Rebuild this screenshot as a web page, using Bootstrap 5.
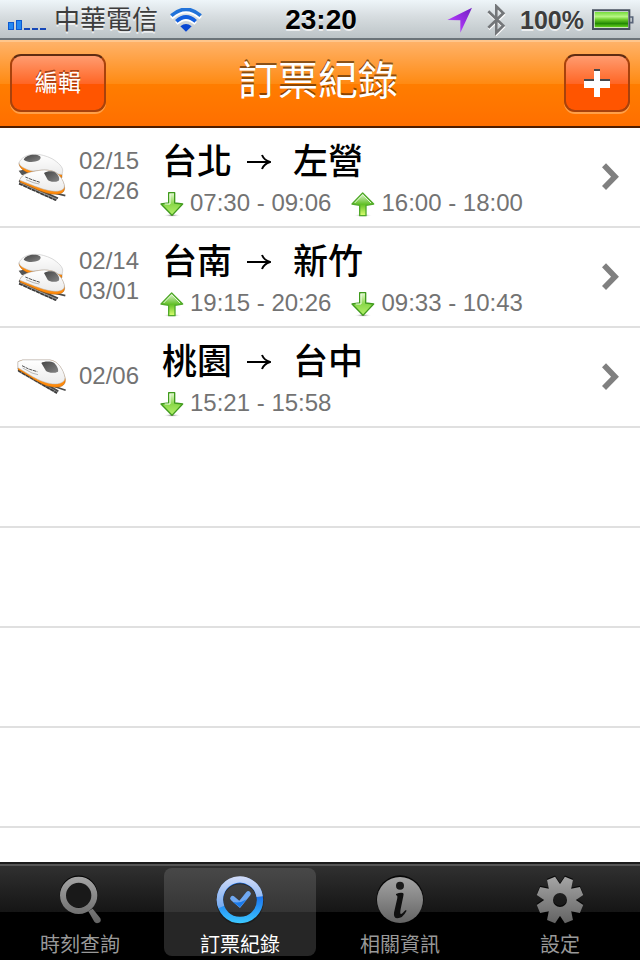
<!DOCTYPE html>
<html lang="zh-Hant">
<head>
<meta charset="utf-8">
<meta name="viewport" content="width=device-width, initial-scale=1">
<title>訂票紀錄</title>
<link href="https://cdn.jsdelivr.net/npm/bootstrap@5.3.0/dist/css/bootstrap.min.css" rel="stylesheet">
<style>
body { font-family: "Liberation Sans", "Noto Sans CJK TC", sans-serif; font-size: 24px; line-height: 30px; background: #fff; color: #000; }
svg { display: block; flex-shrink: 0; }
.status { height: 40px; padding: 2px 6px 0 8px; background: linear-gradient(#eef5f9, #d6dcdf 45%, #bcc4c7); border-bottom: 2px solid #6b7479; font-size: 26px; line-height: 36px; color: #3d3d3d; text-shadow: 0 2px 0 rgba(255,255,255,.7); }
.side { flex: 1 1 0; }
.wifi { margin-left: 12px; }
.bluetooth { margin: 0 14px; }
.clock { color: #000; font-size: 28px; }
.charge { font-size: 25px; }
.titlebar { height: 88px; padding: 0 10px 2px; border-top: 2px solid #ffc68c; border-bottom: 2px solid #4f1d00; background: linear-gradient(#ffb268, #ff8a12 50%, #ff7d00 50%, #ff6f00); }
.titlebar h1 { margin: 0 4px 4px 0; font-size: 40px; line-height: 48px; font-weight: 400; color: #fff; text-shadow: 0 -2px 0 rgba(70,35,0,.65); }
.btn-glossy { height: 58px; border: 2px solid #a8420c; border-top-color: #5f2c12; border-radius: 11px; padding: 0; font-size: 23px; line-height: 30px; color: #fff; text-shadow: 0 -2px 0 rgba(100,30,0,.6); background: linear-gradient(#ff9c70, #ff6524 52%, #ff5500 52%, #ff5500); box-shadow: 0 2px 0 rgba(255,190,120,.6); }
.btn-glossy:hover { color: #fff; background: #ff5500; }
.edit { width: 96px; }
.add { width: 66px; }
.list-group-flush > .trip { min-height: 100px; padding: 5px 20px 7px 16px; border-width: 0 0 2px; border-color: #e0e0e0; color: #737373; }
.list-group-flush > .trip:last-child { border-bottom-width: 2px; }
.train-icon { margin-top: 4px; }
.days { width: 81px; margin-left: 11px; }
.trip h2 { padding: 4px 0 0 2px; font-size: 35px; line-height: 48px; font-weight: 500; color: #000; }
.to { width: 24px; margin: 0 22px 0 15px; }
.legs { gap: 20px; margin-top: 2px; }
.legs svg { margin: 3px 6px 0 0; }
.blank-rows { background: repeating-linear-gradient(#fff 0 98px, #e0e0e0 98px 100px); }
.tabs { height: 98px; border-top: 2px solid #1c1c1c; background: linear-gradient(#555 0 2px, #303030 2px, #151515 48px, #000 48px); }
.tabs a { flex: 1 1 0; margin: 4px; height: 88px; padding-top: 8px; border-radius: 8px; color: #999; font-size: 20px; line-height: 28px; text-decoration: none; }
.tabs a.active { color: #fff; background: linear-gradient(#484848, #353535 44px, #262626 44px); }
.tabs svg { overflow: visible; margin-bottom: 7px; }
</style>
<script src="https://cdn.jsdelivr.net/npm/bootstrap@5.3.0/dist/js/bootstrap.bundle.min.js"></script>
</head>
<body class="d-flex flex-column min-vh-100">

<svg width="0" height="0" class="position-absolute" aria-hidden="true">
  <defs>
    <linearGradient id="gGreen" x1="0" y1="0" x2="0" y2="1"><stop offset="0" stop-color="#e4f8d4"/><stop offset=".5" stop-color="#8ad84a"/><stop offset="1" stop-color="#b5f06a"/></linearGradient>
    <linearGradient id="gUp" x1="0" y1="0" x2="0" y2="1"><stop offset="0" stop-color="#e4f8d6"/><stop offset=".5" stop-color="#62c026"/><stop offset="1" stop-color="#dcff70"/></linearGradient>
    <linearGradient id="gHull" x1="0" y1="0" x2="0" y2="1"><stop offset="0" stop-color="#fff"/><stop offset="1" stop-color="#ebebeb"/></linearGradient>
    <linearGradient id="gGlass" x1="0" y1="0" x2="1" y2="1"><stop offset="0" stop-color="#444"/><stop offset="1" stop-color="#858585"/></linearGradient>
    <linearGradient id="gTab" gradientUnits="userSpaceOnUse" x1="0" y1="0" x2="0" y2="144"><stop offset="0" stop-color="#a6a6a6"/><stop offset="1" stop-color="#626262"/></linearGradient>
    <linearGradient id="gSoft" gradientUnits="userSpaceOnUse" x1="0" y1="0" x2="0" y2="95"><stop offset="0" stop-color="#d3ddf9"/><stop offset="1" stop-color="#75a9ee"/></linearGradient>
    <linearGradient id="gBlue" gradientUnits="userSpaceOnUse" x1="0" y1="60" x2="0" y2="142"><stop offset="0" stop-color="#1b72ee"/><stop offset="1" stop-color="#3cc8ff"/></linearGradient>
    <radialGradient id="gShade"><stop offset="0" stop-color="#777"/><stop offset="1" stop-color="#fff" stop-opacity="0"/></radialGradient>
    <symbol id="down" viewBox="0 0 72 75">
      <ellipse cx="36" cy="70" rx="27" ry="5" fill="url(#gShade)"/>
      <path d="M26 2H44V33L68 36 36 70 3 36 26 33Z" fill="url(#gGreen)" stroke="#3f9a1c" stroke-width="4" stroke-linejoin="round"/>
      <path d="M30 6V36H14" fill="none" stroke="#f2fce9" stroke-width="3"/>
    </symbol>
    <symbol id="up" viewBox="0 0 72 75">
      <ellipse cx="36" cy="70" rx="28" ry="5" fill="url(#gShade)"/>
      <path d="M35 3 68 36 45 40V71H26V40L3 36Z" fill="url(#gUp)" stroke="#50a92a" stroke-width="4" stroke-linejoin="round"/>
      <path d="M35 8 60 33M35 8 11 33" stroke="#e2f7d4" stroke-width="3"/>
    </symbol>
    <symbol id="train" viewBox="48 48 156 117">
      <path d="M54 82 175 148 170 159 54 92Z" fill="#999"/>
      <path d="M54 88 171 156" stroke="#3a3a3a" stroke-width="5" stroke-dasharray="12 2"/>
      <path d="M54 80 175 151" stroke="#4a4a4a" stroke-width="5"/>
      <path d="M150 132 197 148" stroke="#4a4a4a" stroke-width="5"/>
      <path d="M54 62 68 57H150C174 60 190 86 196 114 198 129 188 139 168 139 140 139 118 125 100 114L54 86Z" fill="#ff8a0a" stroke="#6e4218" stroke-width="1"/>
      <path d="M54 62 68 57H150C174 60 190 85 195 110 194 122 184 128 166 129 142 129 118 118 98 107L54 80Z" fill="url(#gHull)" stroke="#b5b5b5" stroke-width="1.500"/>
      <path d="M124 66C130 60 154 60 162 65 172 74 176 86 174 92 162 98 146 96 138 90Z" fill="url(#gGlass)"/>
      <path d="M66 74 86 84 112 92" fill="none" stroke="#555" stroke-width="3" stroke-dasharray="10 2"/>
      <path d="M68 81 96 96 114 101" fill="none" stroke="#999" stroke-width="2"/>
    </symbol>
    <symbol id="trains" viewBox="48 66 156 156">
      <path d="M56 122 78 118 90 128 66 136Z" fill="#555"/>
      <path d="M57 98 92 112 186 132V143L170 138 88 131C70 122 56 112 57 98Z" fill="#ff8a0a" stroke="#6e4218" stroke-width="1"/>
      <path d="M57 99C62 84 80 73 104 73 120 72 140 78 156 86 176 98 190 112 188 124L186 134 150 128 92 122C74 116 60 110 57 99Z" fill="url(#gHull)" stroke="#b5b5b5" stroke-width="1.500"/>
      <path d="M71 89C76 76 96 72 112 75 124 78 124 84 117 91 102 98 82 98 71 89Z" fill="url(#gGlass)"/>
      <path d="M57 154 174 204 168 213 57 162Z" fill="#999"/>
      <path d="M57 161 168 211" stroke="#3a3a3a" stroke-width="5" stroke-dasharray="12 2"/>
      <path d="M57 152 174 205" stroke="#444" stroke-width="5"/>
      <path d="M150 186 196 197" stroke="#4a4a4a" stroke-width="5"/>
      <path d="M60 148C68 132 88 126 108 123 130 118 156 120 168 128 184 140 193 160 194 174 194 187 184 193 166 193 140 193 116 181 98 173L60 157Z" fill="#ff8a0a" stroke="#6e4218" stroke-width="1"/>
      <path d="M60 148C68 132 88 126 108 123 130 118 156 120 168 128 184 140 192 156 193 168 193 179 182 184 166 184 140 183 116 173 98 166L60 151Z" fill="url(#gHull)" stroke="#b5b5b5" stroke-width="1.500"/>
      <path d="M132 129C142 122 158 122 167 128 176 136 180 146 176 152 164 158 150 156 143 149Z" fill="url(#gGlass)"/>
      <path d="M76 141 96 149 120 157" fill="none" stroke="#555" stroke-width="3" stroke-dasharray="10 2"/>
      <path d="M78 149 100 158 118 162" fill="none" stroke="#999" stroke-width="2"/>
    </symbol>
    <symbol id="arrow" viewBox="0 0 24 18"><path d="M0 9H21M15 2Q17 7 23 9 17 11 15 16" fill="none" stroke="#000" stroke-width="2"/></symbol>
    <symbol id="chev" viewBox="0 0 54 81"><path d="M6 7 39 41 6 75" fill="none" stroke="#808080" stroke-width="17"/></symbol>
    <mask id="gearMask">
      <g fill="#fff" transform="rotate(22.500 72 72)">
        <path id="t1" d="M53 32 59 2H85L91 32Z"/>
        <use href="#t1" transform="rotate(45 72 72)"/><use href="#t1" transform="rotate(90 72 72)"/><use href="#t1" transform="rotate(135 72 72)"/><use href="#t1" transform="rotate(180 72 72)"/><use href="#t1" transform="rotate(225 72 72)"/><use href="#t1" transform="rotate(270 72 72)"/><use href="#t1" transform="rotate(315 72 72)"/>
      </g>
      <circle cx="72" cy="72" r="46" fill="#fff"/><circle cx="72" cy="72" r="21" fill="#000"/>
    </mask>
  </defs>
</svg>

<header>
  <div class="status d-flex align-items-center">
    <div class="side d-flex align-items-center">
      <svg width="38" height="22" viewBox="0 0 38 22" aria-hidden="true"><path d="M0 13H6V21H0ZM8 11H14V21H8Z" fill="#0c59d0"/><path d="M1 14H5V20H1ZM9 12H13V20H9Z" fill="#2489f2"/><path d="M16 19h6v2h-6zM24 19h6v2h-6zM32 19h6v2h-6z" fill="#1648b8"/></svg>
      <span class="ms-2">中華電信</span>
      <svg class="wifi" width="32" height="24" viewBox="0 0 96 72" aria-hidden="true"><path d="M4 26Q48-14 92 26M19 42Q48 16 77 42" fill="none" stroke="#fff" stroke-width="11" transform="translate(0 4)"/><path d="M4 23Q48-15 92 23" fill="none" stroke="#2273d9" stroke-width="11"/><path d="M19 40Q48 14 77 40" fill="none" stroke="#125fdf" stroke-width="11"/><path d="M31 55Q48 41 65 55L48 71Z" fill="#0847d3"/></svg>
    </div>
    <time class="clock fw-bold">23:20</time>
    <div class="side d-flex align-items-center justify-content-end">
      <svg width="26" height="26" viewBox="0 0 78 78" aria-hidden="true"><defs><linearGradient id="gLoc" x1="1" y1="0" x2="0" y2="1"><stop offset="0" stop-color="#7020c0"/><stop offset=".6" stop-color="#a534f0"/><stop offset="1" stop-color="#c879ff"/></linearGradient></defs><path d="M75 2 40 77V40L1 39Z" fill="url(#gLoc)"/></svg>
      <svg class="bluetooth" width="19" height="32" viewBox="0 0 57 96" aria-hidden="true"><path d="M4 22 49 65 28 86V7L49 28 4 71" fill="none" stroke="#fff" stroke-width="8" transform="translate(1 4)"/><path d="M4 22 49 65 28 86V7L49 28 4 71" fill="none" stroke="#737679" stroke-width="8"/></svg>
      <span class="charge fw-bold me-2">100%</span>
      <svg width="42" height="22" viewBox="0 0 126 66" aria-label="battery"><defs><linearGradient id="gBat" x1="0" y1="0" x2="0" y2="1"><stop offset="0" stop-color="#76dc3c"/><stop offset=".3" stop-color="#b8f584"/><stop offset=".5" stop-color="#6acb28"/><stop offset=".75" stop-color="#248a05"/><stop offset="1" stop-color="#66d61b"/></linearGradient></defs><path d="M3 4H112V60H3Z" fill="#e9f0ec" stroke="#47505f" stroke-width="6"/><path d="M8 9H108V55H8Z" fill="url(#gBat)"/><path d="M114 24H122V41H114" fill="none" stroke="#596579" stroke-width="5"/></svg>
    </div>
  </div>
  <nav class="titlebar d-flex align-items-center">
    <div class="side"><button type="button" class="btn btn-glossy edit">編輯</button></div>
    <h1>訂票紀錄</h1>
    <div class="side d-flex justify-content-end"><button type="button" class="btn btn-glossy add d-flex align-items-center justify-content-center" aria-label="新增"><svg width="26" height="28" viewBox="0 0 26 28"><path d="M10 0h6v10h10v7H16v9H10V17H0V10H10Z" fill="#46474a"/><path d="M10 2h6v10h10v7H16v9H10V19H0V12H10Z" fill="#fff"/></svg></button></div>
  </nav>
</header>

<main class="flex-grow-1 d-flex flex-column">
  <div class="list-group list-group-flush">
    <a href="#" class="list-group-item list-group-item-action trip d-flex align-items-center">
      <svg class="train-icon" width="52" height="52" aria-hidden="true"><use href="#trains"/></svg>
      <div class="days">02/15<br>02/26</div>
      <div class="flex-grow-1">
        <h2 class="m-0 d-flex align-items-center">台北<svg class="to" height="18"><use href="#arrow"/></svg>左營</h2>
        <div class="d-flex legs"><span class="d-flex align-items-center"><svg width="24" height="25"><use href="#down"/></svg>07:30 - 09:06</span><span class="d-flex align-items-center"><svg width="24" height="25"><use href="#up"/></svg>16:00 - 18:00</span></div>
      </div>
      <svg width="18" height="27" aria-hidden="true"><use href="#chev"/></svg>
    </a>
    <a href="#" class="list-group-item list-group-item-action trip d-flex align-items-center">
      <svg class="train-icon" width="52" height="52" aria-hidden="true"><use href="#trains"/></svg>
      <div class="days">02/14<br>03/01</div>
      <div class="flex-grow-1">
        <h2 class="m-0 d-flex align-items-center">台南<svg class="to" height="18"><use href="#arrow"/></svg>新竹</h2>
        <div class="d-flex legs"><span class="d-flex align-items-center"><svg width="24" height="25"><use href="#up"/></svg>19:15 - 20:26</span><span class="d-flex align-items-center"><svg width="24" height="25"><use href="#down"/></svg>09:33 - 10:43</span></div>
      </div>
      <svg width="18" height="27" aria-hidden="true"><use href="#chev"/></svg>
    </a>
    <a href="#" class="list-group-item list-group-item-action trip d-flex align-items-center">
      <svg width="52" height="39" aria-hidden="true"><use href="#train"/></svg>
      <div class="days">02/06</div>
      <div class="flex-grow-1">
        <h2 class="m-0 d-flex align-items-center">桃園<svg class="to" height="18"><use href="#arrow"/></svg>台中</h2>
        <div class="d-flex legs"><span class="d-flex align-items-center"><svg width="24" height="25"><use href="#down"/></svg>15:21 - 15:58</span></div>
      </div>
      <svg width="18" height="27" aria-hidden="true"><use href="#chev"/></svg>
    </a>
  </div>
  <div class="blank-rows flex-grow-1"></div>
</main>

<nav class="tabs d-flex text-center">
  <a href="#" class="d-flex flex-column align-items-center"><svg width="48" height="48" viewBox="0 0 144 144" aria-hidden="true"><circle cx="68" cy="57" r="47" fill="#191919"/><circle cx="68" cy="55" r="48" fill="none" stroke="#050505" stroke-width="17"/><circle cx="68" cy="58" r="47" fill="none" stroke="url(#gTab)" stroke-width="18"/><path d="M97 106 110 98 133 127Q137 137 129 140 120 144 115 137Z" fill="url(#gTab)"/></svg>時刻查詢</a>
  <a href="#" class="active d-flex flex-column align-items-center" aria-current="page"><svg width="48" height="48" viewBox="0 0 144 144" aria-hidden="true"><circle cx="72" cy="76" r="61" fill="none" stroke="#111" stroke-opacity=".5" stroke-width="20"/><circle cx="72" cy="72" r="60" fill="none" stroke="url(#gBlue)" stroke-width="19"/><path d="M16 93A60 60 0 1 1 131 62" fill="none" stroke="url(#gSoft)" stroke-width="19"/><path d="M50 67 71 85 97 53" fill="none" stroke="#70a8f1" stroke-width="15" stroke-linecap="round"/><path d="M51 78Q72 83 92 70L72 94Z" fill="#197aea"/></svg>訂票紀錄</a>
  <a href="#" class="d-flex flex-column align-items-center"><svg width="48" height="48" viewBox="0 0 144 144" aria-hidden="true"><circle cx="72" cy="69" r="71" fill="#080808"/><circle cx="72" cy="72" r="69" fill="url(#gTab)"/><circle cx="72" cy="29" r="12" fill="#1b1b1b"/><path d="M60 54Q72 49 81 51 84 53 82 60L74 99Q71 114 75 114 79 114 88 103 93 101 91 106 80 127 64 127 52 126 54 110L64 66Q66 59 60 57Z" fill="#101010"/></svg>相關資訊</a>
  <a href="#" class="d-flex flex-column align-items-center"><svg width="48" height="48" viewBox="0 0 144 144" aria-hidden="true"><g transform="translate(0 -4)"><rect width="144" height="144" fill="#080808" mask="url(#gearMask)"/></g><rect width="144" height="144" fill="url(#gTab)" mask="url(#gearMask)"/></svg>設定</a>
</nav>
</body>
</html>
